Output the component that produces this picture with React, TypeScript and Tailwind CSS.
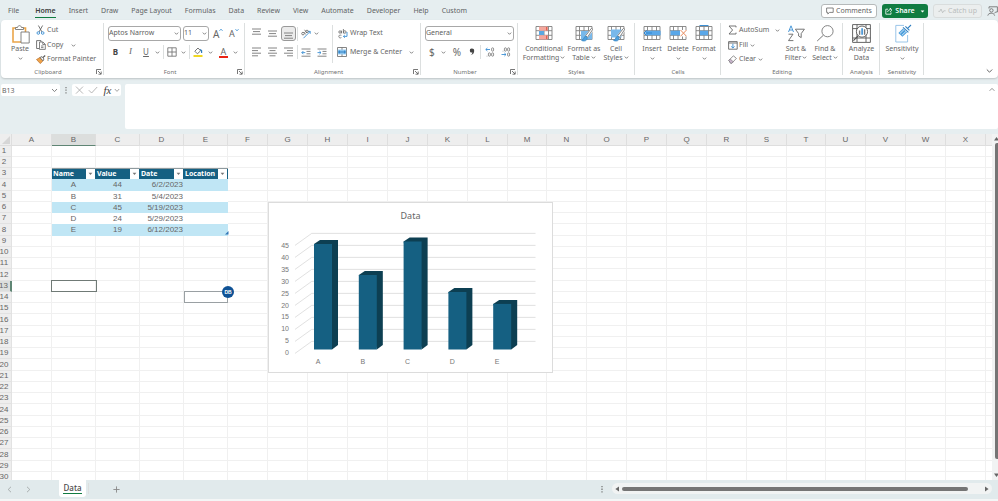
import type { ReactNode } from "react";

const TABS = ["Home", "Insert", "Draw", "Page Layout", "Formulas", "Data", "Review", "View", "Automate", "Developer", "Help", "Custom"];
const COLS = "ABCDEFGHIJKLMNOPQRSTUVWX".split("");
const WIDE = ["B", "C", "D", "E"];
const NARROW = ["M", "T"];
const HEADERS = ["Name", "Value", "Date", "Location"];
const RECORDS = [
  ["A", "44", "6/2/2023", ""],
  ["B", "31", "5/4/2023", ""],
  ["C", "45", "5/19/2023", ""],
  ["D", "24", "5/29/2023", ""],
  ["E", "19", "6/12/2023", ""],
];

function Svg({ w, h, className = "", children }: { w: number; h: number; className?: string; children: ReactNode }) {
  return (
    <svg width={w} height={h} viewBox={`0 0 ${w} ${h}`} fill="none" aria-hidden="true" className={`shrink-0 ${className}`}>
      {children}
    </svg>
  );
}

function Chevron({ className = "" }: { className?: string }) {
  return (
    <Svg w={5} h={5} className={className}>
      <path d="M0.8 1.6 L2.5 3.3 L4.2 1.6" stroke="#777" strokeWidth="0.9" />
    </Svg>
  );
}

function Launcher() {
  return (
    <button aria-label="More options" className="absolute right-[2px] bottom-[3px]">
      <Svg w={6} h={6}>
        <path d="M0.5 5 V0.5 H5 M2 2 L5 5 M5.2 2.5 V5.2 H2.5" stroke="#555" strokeWidth="0.8" />
      </Svg>
    </button>
  );
}

function Group({ label, width, launcher, children }: { label: string; width: string; launcher?: boolean; children: ReactNode }) {
  return (
    <section className={`relative flex shrink-0 flex-col ${width}`}>
      <div className="flex h-[47px]">{children}</div>
      <h2 className={`text-center text-[6px] leading-[10px] text-[#707070] ${launcher ? "pr-[9px]" : ""}`}>{label}</h2>
      {launcher && <Launcher />}
      <div className="absolute top-[3px] right-0 bottom-[3px] w-px bg-[#dcdfdf]" />
    </section>
  );
}

function Big({ icon, lines, arrow, width }: { icon: ReactNode; lines: string[]; arrow?: boolean; width: string }) {
  return (
    <button className={`flex shrink-0 flex-col items-center pt-[5px] leading-[9px] whitespace-nowrap ${width}`}>
      <span className="flex h-[19px] items-start">{icon}</span>
      <span>{lines[0]}</span>
      <span className="flex items-center gap-px">
        {lines[1]}
        {arrow && <Chevron className={lines[1] ? "" : "mt-[3px]"} />}
      </span>
    </button>
  );
}

function Small({ icon, text, children }: { icon: ReactNode; text: string; children?: ReactNode }) {
  return (
    <button className="flex h-[15px] items-center whitespace-nowrap">
      <span className="flex w-[11px]">{icon}</span>
      {text}
      {children}
    </button>
  );
}

function Lines({ xs, y = 1 }: { xs: number[][]; y?: number }) {
  return (
    <Svg w={9} h={10}>
      {xs.map(([a, b], i) => (
        <path key={i} d={`M${a} ${y + i * 2.6} H${b}`} stroke="#777" strokeWidth="0.9" />
      ))}
    </Svg>
  );
}

function Sep({ className = "" }: { className?: string }) {
  return <div className={`w-px shrink-0 bg-[#dcdfdf] ${className}`} />;
}

function TableGrid({ children }: { children?: ReactNode }) {
  return (
    <Svg w={18} h={17}>
      <path d="M1 1.5 H17 V14.5 H1 Z M1 5.7 H17 M1 10.3 H17 M4.5 1.5 V14.5 M9 1.5 V14.5 M13.5 1.5 V14.5" stroke="#808080" strokeWidth="0.9" fill="#fff" />
      {children}
    </Svg>
  );
}

function Brush() {
  return (
    <>
      <path d="M17.5 4 L11 12" stroke="#fff" strokeWidth="3.4" />
      <path d="M17.8 4.3 L12.4 12.4 L10.6 10.8 L16.4 3.4 Z" fill="#fff" stroke="#666" strokeWidth="0.8" />
      <path d="M11 11 C9 11 9.2 14.6 6.5 15.4 C9.5 17 12.5 15.6 12.2 12.6 Z" fill="#4d9fdc" stroke="#2f7fc0" strokeWidth="0.6" />
    </>
  );
}

function ClipboardGroup() {
  return (
    <Group label="Clipboard" width="w-[103px]" launcher>
      <Big
        width="w-[35px] pl-[3px]"
        lines={["Paste", ""]}
        arrow
        icon={
          <Svg w={18} h={19} className="ml-[2px]">
            <path d="M1 3 H13.5 V17 H1 Z" stroke="#eaa54a" strokeWidth="1.6" fill="#fff" />
            <path d="M3.5 4.5 V2.5 H5.5 C6 0 9 0 9.5 2.5 H11.5 V4.5 Z" fill="#fff" stroke="#777" strokeWidth="0.9" />
            <path d="M9 7 H17.2 V18 H9 Z" fill="#fff" stroke="#777" strokeWidth="0.9" />
          </Svg>
        }
      />
      <div className="flex flex-col pt-[3px]">
        <Small
          text="Cut"
          icon={
            <Svg w={9} h={10}>
              <path d="M2.4 0.5 L6 7 M6.6 0.5 L3 7" stroke="#666" strokeWidth="0.9" />
              <circle cx="2.3" cy="8" r="1.3" stroke="#3b8fd4" strokeWidth="0.9" />
              <circle cx="6.7" cy="8" r="1.3" stroke="#3b8fd4" strokeWidth="0.9" />
            </Svg>
          }
        />
        <Small
          text="Copy"
          icon={
            <Svg w={10} h={10}>
              <path d="M3 8.5 H0.6 V0.6 H5 V2" stroke="#666" strokeWidth="0.9" />
              <path d="M3.5 2 H7 L9.3 4.3 V9.4 H3.5 Z M6.8 2 V4.5 H9.3 M5 6 H7.5 M5 7.6 H7.5" stroke="#666" strokeWidth="0.8" />
            </Svg>
          }
        >
          <Chevron className="ml-[8px]" />
        </Small>
        <Small
          text="Format Painter"
          icon={
            <Svg w={10} h={9}>
              <path d="M0.5 4.5 L4 2.5 L7 5.8 L4.3 8.6 Z" fill="#f0a34a" stroke="#b86f28" strokeWidth="0.7" />
              <path d="M4 2.5 L6 1.6 L8 4 L7 5.8 Z" fill="#fff" stroke="#555" strokeWidth="0.8" />
              <path d="M6.8 2.6 L9.2 0.5" stroke="#555" strokeWidth="1.2" />
            </Svg>
          }
        />
      </div>
    </Group>
  );
}

function Picker({ label, value, width }: { label: string; value: string; width: string }) {
  return (
    <div className={`relative shrink-0 ${width}`}>
      <select aria-label={label} className="h-[15px] w-full appearance-none rounded-[3px] border border-[#a8a8a8] bg-white text-[7px] text-[#606060]">
        <option>{value}</option>
      </select>
      <Chevron className="pointer-events-none absolute top-[5px] right-[2px]" />
    </div>
  );
}

function FontGroup() {
  return (
    <Group label="Font" width="w-[141px]" launcher>
      <div className="flex flex-col gap-[4px] pt-[6px] pl-[4px]">
        <div className="flex h-[15px] items-center">
          <Picker label="Font" value="Aptos Narrow" width="w-[73px]" />
          <div className="w-[2px]" />
          <Picker label="Font size" value="11" width="w-[26px]" />
          <button aria-label="Increase font size" className="ml-[4px] flex w-[13px] items-start text-[10px] leading-[12px]">
            A
            <Svg w={4} h={4}><path d="M0.5 2.8 L2 1.2 L3.5 2.8" stroke="#3b8fd4" strokeWidth="0.9" /></Svg>
          </button>
          <button aria-label="Decrease font size" className="ml-[3px] flex items-start text-[9px] leading-[12px]">
            A
            <Svg w={4} h={4}><path d="M0.5 1.2 L2 2.8 L3.5 1.2" stroke="#3b8fd4" strokeWidth="0.9" /></Svg>
          </button>
        </div>
        <div className="flex h-[14px] items-center">
          <button className="w-[15px] text-[8px] font-bold text-[#444]">B</button>
          <button className="w-[15px] font-['Liberation_Serif',serif] text-[9px] italic">I</button>
          <button className="w-[16px] text-[8px] underline">U</button>
          <Chevron className="ml-px" />
          <Sep className="mx-[3px] h-[14px]" />
          <button aria-label="Borders" className="flex">
            <Svg w={10} h={10}><path d="M0.8 0.8 H9.2 V9.2 H0.8 Z M5 0.8 V9.2 M0.8 5 H9.2" stroke="#777" strokeWidth="0.9" /></Svg>
          </button>
          <Chevron className="ml-[4px]" />
          <Sep className="mx-[3px] h-[14px]" />
          <button aria-label="Fill color" className="flex">
            <Svg w={10} h={10}>
              <path d="M1.8 4.2 L5 1 L7.6 3.8 L4.4 6.8 Z" stroke="#666" strokeWidth="0.9" />
              <path d="M7 2.4 L8.6 3.6 V6" stroke="#2f7fc0" strokeWidth="1.2" />
              <rect x="0.5" y="8" width="9" height="2" fill="#f0d722" />
            </Svg>
          </button>
          <Chevron className="ml-[5px]" />
          <button aria-label="Font color" className="ml-[6px] flex h-[11px] w-[9px] flex-col items-center border-b-2 border-[#ea2414] text-[9px] leading-[9px]">A</button>
          <Chevron className="ml-[5px]" />
        </div>
      </div>
    </Group>
  );
}

function IndentIcon({ left }: { left?: boolean }) {
  return (
    <Svg w={10} h={9}>
      <path d="M0.5 1 H9.5 M5.5 3.4 H9.5 M5.5 5.8 H9.5 M0.5 8.2 H9.5" stroke="#777" strokeWidth="0.9" />
      <path d={left ? "M4.3 4.6 H0.8 M2.4 3 L0.8 4.6 L2.4 6.2" : "M0.5 4.6 H4 M2.4 3 L4 4.6 L2.4 6.2"} stroke="#3b8fd4" strokeWidth="0.9" />
    </Svg>
  );
}

function AlignmentGroup() {
  return (
    <Group label="Alignment" width="w-[176px]" launcher>
      <div className="flex flex-col gap-[4px] pt-[6px] pl-[7px]">
        <div className="flex h-[15px] items-center">
          <button aria-label="Top align" className="flex w-[16px] pb-[2px]"><Lines xs={[[0, 9], [1, 8], [0, 9]]} /></button>
          <button aria-label="Middle align" className="flex w-[13px]"><Lines y={2} xs={[[0, 9], [1, 8], [0, 9]]} /></button>
          <button aria-label="Bottom align" className="flex h-[15px] w-[15px] items-center justify-center rounded-[3px] border border-[#999] bg-[#ebebeb]"><Lines y={4} xs={[[0, 9], [1, 8], [0, 9]]} /></button>
          <Sep className="ml-px h-[14px]" />
          <button aria-label="Orientation" className="ml-[3px] flex items-center">
            <Svg w={10} h={10}>
              <path d="M2.5 9.2 L9 2.6 M6.8 2.4 H9.2 V4.8" stroke="#3b8fd4" strokeWidth="0.9" />
              <circle cx="2" cy="4.6" r="1.3" stroke="#666" strokeWidth="0.8" />
              <path d="M3.2 3.2 L4.6 5.4 M3.6 0.8 L5.8 4" stroke="#666" strokeWidth="0.8" />
              <circle cx="6" cy="2.4" r="1.2" stroke="#666" strokeWidth="0.8" />
            </Svg>
            <Chevron className="ml-[3px]" />
          </button>
        </div>
        <div className="flex h-[14px] items-center">
          <button aria-label="Align left" className="flex w-[16px]"><Lines xs={[[0, 9], [0, 6], [0, 9], [0, 6]]} /></button>
          <button aria-label="Center" className="flex w-[16px]"><Lines xs={[[0, 9], [1.5, 7.5], [0, 9], [1.5, 7.5]]} /></button>
          <button aria-label="Align right" className="flex w-[13px]"><Lines xs={[[0, 9], [3, 9], [0, 9], [3, 9]]} /></button>
          <Sep className="h-[14px]" />
          <button aria-label="Decrease indent" className="ml-[3px] flex w-[16px]"><IndentIcon left /></button>
          <button aria-label="Increase indent" className="flex w-[14px]"><IndentIcon /></button>
        </div>
      </div>
      <Sep className="mt-[5px] ml-px h-[38px]" />
      <div className="flex flex-col gap-[4px] pt-[6px] pl-[4px]">
        <button className="flex h-[15px] items-center whitespace-nowrap">
          <Svg w={10} h={10} className="mr-[2px] ml-px">
            <circle cx="2" cy="3" r="1.2" stroke="#666" strokeWidth="0.8" />
            <path d="M3.5 1.6 V4.4 M5.4 0 V4.4 M3.4 6.3 C1.5 5.6 0.8 6.6 0.8 7.5 C0.8 9 2.6 9.2 3.4 8.6" stroke="#666" strokeWidth="0.8" />
            <circle cx="6.8" cy="3" r="1.3" stroke="#666" strokeWidth="0.8" />
            <path d="M9 3 V7.4 H5.4 M6.8 6 L5.4 7.4 L6.8 8.8" stroke="#3b8fd4" strokeWidth="0.9" />
          </Svg>
          Wrap Text
        </button>
        <button className="flex h-[14px] items-center whitespace-nowrap">
          <Svg w={10} h={10} className="mr-[3px]">
            <path d="M0.5 0.5 H9.5 V9.5 H0.5 Z M5 0.5 V3 M5 7 V9.5" stroke="#777" strokeWidth="0.9" />
            <rect x="0.8" y="2.6" width="8.4" height="4.8" fill="#8cc6f0" />
            <path d="M1.6 5 H8.4 M3 3.7 L1.6 5 L3 6.3 M7 3.7 L8.4 5 L7 6.3" stroke="#1d70b8" strokeWidth="0.8" />
          </Svg>
          Merge &amp; Center
          <Chevron className="ml-[7px]" />
        </button>
      </div>
    </Group>
  );
}

function NumberGroup() {
  return (
    <Group label="Number" width="w-[97px]" launcher>
      <div className="flex flex-col gap-[4px] pt-[6px] pl-[4px]">
        <Picker label="Number format" value="General" width="w-[89px]" />
        <div className="flex h-[14px] items-center text-[9px]">
          <button className="w-[16px] pl-[4px] text-left text-[10px]">$</button>
          <Chevron />
          <button className="ml-[4px] w-[14px] text-[10px]">%</button>
          <button aria-label="Comma style" className="ml-[5px] flex">
            <Svg w={6} h={8}><path d="M3 0.5 A2 2 0 1 0 3.4 4.4 C3.2 5.8 2.4 6.6 1.4 7.2 C4 6.8 5.2 5 5.2 2.8 C5.2 1.4 4.3 0.5 3 0.5 Z" fill="#444" /></Svg>
          </button>
          <Sep className="mr-[4px] ml-[5px] h-[14px]" />
          <button aria-label="Increase decimal" className="flex w-[16px]">
            <Svg w={10} h={10}>
              <path d="M5 2.5 H0.8 M2.4 1 L0.8 2.5 L2.4 4" stroke="#3b8fd4" strokeWidth="0.9" />
              <path d="M2 8.8 V9.4" stroke="#666" strokeWidth="0.8" />
              <rect x="6.6" y="0.8" width="2" height="3.4" rx="1" stroke="#666" strokeWidth="0.7" />
              <rect x="3.4" y="5.8" width="2" height="3.4" rx="1" stroke="#666" strokeWidth="0.7" />
              <rect x="6.6" y="5.8" width="2" height="3.4" rx="1" stroke="#666" strokeWidth="0.7" />
            </Svg>
          </button>
          <button aria-label="Decrease decimal" className="flex">
            <Svg w={10} h={10}>
              <path d="M0.5 7.5 H5 M3.4 6 L5 7.5 L3.4 9" stroke="#3b8fd4" strokeWidth="0.9" />
              <path d="M2 3.8 V4.4" stroke="#666" strokeWidth="0.8" />
              <rect x="6.6" y="5.8" width="2" height="3.4" rx="1" stroke="#666" strokeWidth="0.7" />
              <rect x="3.4" y="0.8" width="2" height="3.4" rx="1" stroke="#666" strokeWidth="0.7" />
              <rect x="6.6" y="0.8" width="2" height="3.4" rx="1" stroke="#666" strokeWidth="0.7" />
            </Svg>
          </button>
        </div>
      </div>
    </Group>
  );
}

function StylesGroup() {
  return (
    <Group label="Styles" width="w-[117px]">
      <Big
        width="w-[42px] ml-[5px]"
        lines={["Conditional", "Formatting"]}
        arrow
        icon={
          <TableGrid>
            <path d="M4 1.5 H12.5 V5.7 H4 Z M4 10.3 H12.5 V14.5 H4 Z" fill="#f4a79d" />
            <path d="M4 6 H9 V10 H4 Z" fill="#5aa7e0" />
            <path d="M11.8 2 V5.4 M11.8 10.6 V14" stroke="#e05b4b" strokeWidth="1.4" />
          </TableGrid>
        }
      />
      <Big
        width="w-[38px]"
        lines={["Format as", "Table"]}
        arrow
        icon={
          <TableGrid>
            <path d="M6 6 H17 V14.5 H6 Z" fill="#78b8ea" />
            <Brush />
          </TableGrid>
        }
      />
      <Big
        width="w-[26px]"
        lines={["Cell", "Styles"]}
        arrow
        icon={
          <TableGrid>
            <path d="M4 4.5 H14.5 V12.5 H4 Z" fill="#78b8ea" />
            <Brush />
          </TableGrid>
        }
      />
    </Group>
  );
}

function CellsGroup() {
  return (
    <Group label="Cells" width="w-[86px]">
      <Big
        width="w-[26px] ml-[4px]"
        lines={["Insert", ""]}
        arrow
        icon={
          <TableGrid>
            <path d="M3 5.7 H17.6 V10.3 H3 Z" fill="#5aa7e8" />
            <path d="M9 8 H1 M3.6 5.4 L1 8 L3.6 10.6" stroke="#2f86d0" />
          </TableGrid>
        }
      />
      <Big
        width="w-[26px]"
        lines={["Delete", ""]}
        arrow
        icon={
          <TableGrid>
            <path d="M1.5 5.7 H11 V10.3 H1.5 Z" fill="#5aa7e8" />
            <path d="M11 5 H18 V11.5 H11 Z" fill="#fff" />
            <path d="M11.5 5 L17.5 11.3 M17.5 5 L11.5 11.3" stroke="#e88a5d" />
          </TableGrid>
        }
      />
      <Big
        width="w-[26px]"
        lines={["Format", ""]}
        arrow
        icon={
          <TableGrid>
            <path d="M5 5.7 H13 V10.3 H5 Z" fill="#5aa7e8" />
            <path d="M4.5 0.5 H13.5" stroke="#3b8fd4" />
          </TableGrid>
        }
      />
    </Group>
  );
}

function EditingGroup() {
  return (
    <Group label="Editing" width="w-[122px]">
      <div className="flex w-[60px] flex-col pt-[3px] pl-[7px]">
        <Small text="AutoSum" icon={<Svg w={9} h={10}><path d="M8 2.4 V1 H1 L4.6 5 L1 9 H8 V7.6" stroke="#666" strokeWidth="0.9" /></Svg>}>
          <Chevron className="ml-[6px]" />
        </Small>
        <Small
          text="Fill"
          icon={
            <Svg w={10} h={9}>
              <path d="M0.6 0.6 H9.2 V8.2 H0.6 Z M0.6 2 H9.2" stroke="#666" strokeWidth="0.9" />
              <path d="M4.9 2.8 V7 M3.2 5.4 L4.9 7 L6.6 5.4" stroke="#3b8fd4" strokeWidth="0.9" />
            </Svg>
          }
        >
          <Chevron className="ml-[2px]" />
        </Small>
        <Small
          text="Clear"
          icon={
            <Svg w={9} h={9}>
              <path d="M0.8 5.4 L5.4 0.8 L8.4 3.4 L3.8 8.2 H2.6 Z" stroke="#777" strokeWidth="0.8" />
              <path d="M2.2 4 L5.4 6.8 L3.8 8.2 H2.6 L0.8 5.4 Z" fill="#c8b3cc" stroke="#777" strokeWidth="0.6" />
            </Svg>
          }
        >
          <Chevron className="ml-[2px]" />
        </Small>
      </div>
      <Big
        width="w-[30px]"
        lines={["Sort &", "Filter"]}
        arrow
        icon={
          <Svg w={18} h={17}>
            <path d="M1.5 7 L4 0.8 L6.5 7 M2.3 5 H5.7" stroke="#3b8fd4" strokeWidth="0.9" />
            <path d="M1.5 9.2 H6 L1.5 15.6 H6.4" stroke="#666" strokeWidth="0.9" />
            <path d="M8.4 4.2 H17.4 L14.2 8.6 V12.6 L11.6 11 V8.6 Z" stroke="#666" strokeWidth="0.9" />
          </Svg>
        }
      />
      <Big
        width="w-[28px]"
        lines={["Find &", "Select"]}
        arrow
        icon={
          <Svg w={18} h={17}>
            <circle cx="11.5" cy="6.2" r="5.6" stroke="#777" strokeWidth="0.9" />
            <path d="M7.4 10.2 L1.2 16" stroke="#777" />
          </Svg>
        }
      />
    </Group>
  );
}

function SheetGrid() {
  return (
    <table className="w-full table-fixed border-separate border-spacing-0 text-[8px] leading-[10px] text-[#666]">
      <colgroup>
        <col className="w-[12px]" />
        {COLS.map((c) => (
          <col key={c} className={WIDE.includes(c) ? "w-[44px]" : NARROW.includes(c) ? "w-[39px]" : "w-[40px]"} />
        ))}
        <col />
      </colgroup>
      <thead>
        <tr className="h-[12px] bg-[#eeeeee]">
          <th className="border-r border-b border-[#dedede] p-0">
            <Svg w={10} h={10} className="ml-px block"><path d="M9 1 V9 H1 Z" fill="#d6d6d6" /></Svg>
          </th>
          {COLS.map((c) => (
            <th
              key={c}
              scope="col"
              className={c === "B" ? "border-r border-b border-r-[#dedede] border-b-[#5f8574] bg-[#dcdedd] p-0 font-normal" : "border-r border-b border-[#dedede] p-0 font-normal"}
            >
              {c}
            </th>
          ))}
          <th className="border-b border-[#dedede] p-0" />
        </tr>
      </thead>
      <tbody>
        {Array.from({ length: 30 }, (_, i) => i + 1).map((r) => (
          <tr key={r} className={r % 4 === 0 ? "h-[12px]" : "h-[11px]"}>
            <th
              scope="row"
              className={r === 13 ? "overflow-hidden border-r-2 border-b border-r-[#5f8574] border-b-[#e2e2e2] bg-[#dcdedd] p-0 pr-[3px] font-normal" : "overflow-hidden border-r border-b border-[#e2e2e2] bg-[#eeeeee] p-0 pr-[3px] font-normal"}
            >
              <span className="flex justify-center">{r}</span>
            </th>
            {COLS.map((c, ci) => {
              const k = ci - 1;
              if (r === 3 && k >= 0 && k < 4) {
                return (
                  <td key={c} className="border-t border-[#8e9a9e] bg-[#156082] p-0 font-['Noto_Sans',sans-serif] text-[7px] font-bold text-white">
                    <span className="flex items-center justify-between pl-px whitespace-nowrap">
                      {HEADERS[k]}
                      <button aria-label={`Filter ${HEADERS[k]}`} className="mr-px flex h-[10px] w-[9px] items-center justify-center bg-white">
                        <Svg w={5} h={4}><path d="M0.6 0.8 H4.4 L2.5 3 Z" fill="#777" /></Svg>
                      </button>
                    </span>
                  </td>
                );
              }
              if (r > 3 && r < 9 && k >= 0 && k < 4) {
                return (
                  <td
                    key={c}
                    className={`p-0 pr-px ${r % 2 === 0 ? "bg-[#c0e6f5]" : ""} ${k < 2 ? "text-center" : "text-right"}`}
                  >
                    {RECORDS[r - 4][k]}
                  </td>
                );
              }
              return <td key={c} className="border-r border-b border-[#f0f0f0] p-0" />;
            })}
            <td className="border-b border-[#f0f0f0] p-0" />
          </tr>
        ))}
      </tbody>
    </table>
  );
}

const BARS = [
  { name: "A", value: 44 },
  { name: "B", value: 31 },
  { name: "C", value: 45 },
  { name: "D", value: 24 },
  { name: "E", value: 19 },
];

function Chart() {
  return (
    <figure className="absolute top-[68px] left-[268px] h-[171px] w-[285px] border border-[#dcdcdc] bg-white">
      <figcaption className="pt-[6px] text-center font-['Noto_Sans',sans-serif] text-[9px] leading-[13px] text-[#666]">Data</figcaption>
      <svg width="283" height="150" viewBox="0 20 283 150" fill="none" className="block" role="img" aria-label="Column chart of values">
        {Array.from({ length: 10 }, (_, i) => (
          <g key={i}>
            <path d={`M26 ${43.4 + i * 12} L42.7 ${31.4 + i * 12} H266.5`} stroke="#dcdcdc" strokeWidth="0.9" />
            <text x="20" y={46 + i * 11.9} textAnchor="end" fontSize="7" fill="#777">
              {45 - i * 5}
            </text>
          </g>
        ))}
        {BARS.map((b, i) => {
          const x = 45 + i * 44.8;
          const top = 147.5 - b.value * 2.4;
          return (
            <g key={b.name}>
              <path d={`M${x} ${top} L${x + 6} ${top - 4} H${x + 24} V143 L${x + 18} 147.5 Z`} fill="#0d3f52" />
              <path d={`M${x} ${top} H${x + 18} V147.5 H${x} Z`} fill="#156082" />
              <text x={x + 4} y="162" textAnchor="middle" fontSize="7" fill="#777">
                {b.name}
              </text>
            </g>
          );
        })}
      </svg>
    </figure>
  );
}

export default function App() {
  return (
    <div className="flex h-screen flex-col overflow-hidden bg-[#e6eef0] font-['Noto_Sans',sans-serif] text-[7px] text-[#666]">
      <header className="flex h-[20px] shrink-0 items-center pl-[8px] leading-[10px] text-[#5f6364]">
        <nav aria-label="Ribbon tabs" className="flex gap-[13px] pt-[4px] whitespace-nowrap">
          <button className="mr-[3px] pb-[2px]">File</button>
          {TABS.map((t) => (
            <button key={t} className={t === "Home" ? "border-b border-[#107c41] pb-px font-semibold text-[#404040]" : "pb-[2px]"}>
              {t}
            </button>
          ))}
        </nav>
        <div className="ml-auto flex items-center gap-[5px] pt-[2px] whitespace-nowrap">
          <button className="flex h-[14px] w-[56px] items-center justify-center gap-[2px] rounded-[3px] border border-[#b5b9ba] bg-white">
            <Svg w={8} h={8}><path d="M0.6 1 H7.2 V5.4 H3.6 L1.8 7 V5.4 H0.6 Z" stroke="#666" strokeWidth="0.8" /></Svg>
            Comments
          </button>
          <button className="flex h-[14px] w-[46px] items-center justify-center gap-[3px] rounded-[3px] bg-[#107c41] font-semibold text-white">
            <Svg w={7} h={8}><path d="M3 2.2 H0.8 V7.2 H6 V5.4 M2.6 5 C2.8 3.4 4 2.8 5.2 2.8 V1 L6.8 3.2 L5.2 5" stroke="#fff" strokeWidth="0.8" /></Svg>
            Share
            <Svg w={5} h={5} className="ml-[2px]"><path d="M0.6 1.4 H4.4 L2.5 3.6 Z" fill="#fff" /></Svg>
          </button>
          <button className="flex h-[14px] w-[49px] items-center justify-center gap-[2px] rounded-[3px] border border-[#d9dddd] bg-[#ebeeee] text-[#b9bcbc]">
            <Svg w={8} h={6}><path d="M0.4 3.4 H1.8 L3 1 L4.6 4.8 L5.8 2.8 H7.6" stroke="#b9bcbc" strokeWidth="0.8" /></Svg>
            Catch up
          </button>
          <button aria-label="Presence" className="flex">
            <Svg w={11} h={10}>
              <path d="M2 2.6 V0.8 H10.4 V6 H8.6 L7.4 7.4" stroke="#666" strokeWidth="0.8" />
              <circle cx="4.4" cy="4.4" r="1.7" stroke="#666" strokeWidth="0.8" />
              <path d="M0.8 9.6 C1.2 6.4 7.2 6.4 7.6 9.6" stroke="#666" strokeWidth="0.8" />
            </Svg>
          </button>
        </div>
      </header>

      <div className="ml-px flex h-[58px] shrink-0 rounded-[4px] bg-white shadow-[0_1px_2px_rgba(0,0,0,0.18)]">
        <ClipboardGroup />
        <FontGroup />
        <AlignmentGroup />
        <NumberGroup />
        <StylesGroup />
        <CellsGroup />
        <EditingGroup />
        <Group label="Analysis" width="w-[37px]">
          <Big
            width="w-full"
            lines={["Analyze", "Data"]}
            icon={
              <Svg w={19} h={19} className="-mt-px">
                <path d="M0.6 0.6 H18.4 V18.4 H0.6 Z M0.6 4.6 H18.4 M0.6 14 H18.4 M5 0.6 V18 M14 0.6 V18" stroke="#555" strokeWidth="0.9" />
                <circle cx="10" cy="7.6" r="5.6" fill="#fff" stroke="#555" strokeWidth="0.9" />
                <path d="M6 12 L1.4 16.6" stroke="#555" strokeWidth="1.1" />
                <path d="M7.6 6.6 V10.8 M12.6 5.2 V10.8" stroke="#777" strokeWidth="1.4" />
                <path d="M10.1 4.2 V10.8" stroke="#3b8fd4" strokeWidth="1.6" />
              </Svg>
            }
          />
        </Group>
        <Group label="Sensitivity" width="w-[44px]">
          <Big
            width="w-full"
            lines={["Sensitivity", ""]}
            arrow
            icon={
              <Svg w={17} h={19} className="-mt-px ml-[2px]">
                <path d="M9 1.4 H0.8 V18 H12.6 V11" stroke="#8fbfe6" strokeWidth="0.9" />
                <path d="M3.4 9 L8 4.6 L12 8.4 L7.4 12.8 Z" fill="#4d9fdc" />
                <path d="M5 9.4 L9 5.6 M7 11.2 L11 7.4" stroke="#fff" strokeWidth="0.7" />
                <path d="M8 3.4 L13.4 8.4 M10.4 2.4 L14.4 6.4 M12.6 4.4 L16 1" stroke="#2f7fc0" strokeWidth="1.1" />
              </Svg>
            }
          />
        </Group>
        <button aria-label="Collapse ribbon" className="mt-auto mr-[5px] mb-[4px] ml-auto flex">
          <Svg w={7} h={6}><path d="M0.8 1.5 L3.5 4.2 L6.2 1.5" stroke="#555" strokeWidth="0.9" /></Svg>
        </button>
      </div>

      <div className="flex h-[56px] shrink-0 pt-[6px] pb-[5px] pl-px">
        <div className="flex h-[12px] w-[59px] items-center rounded-[2px] bg-white pr-[2px]">
          <input aria-label="Name box" defaultValue="B13" className="w-0 flex-1 bg-transparent pl-px text-[7px] leading-[11px]" />
          <Svg w={7} h={5}><path d="M1 1 L3.5 3.6 L6 1" stroke="#777" strokeWidth="0.9" /></Svg>
        </div>
        <Svg w={12} h={12}><path d="M6 3 V4.2 M6 5.6 V6.8 M6 8.2 V9.4" stroke="#777" strokeWidth="1.2" /></Svg>
        <div className="flex h-[12px] w-[49px] items-center rounded-[2px] bg-white">
          <button aria-label="Cancel" className="ml-[3px] flex"><Svg w={9} h={8}><path d="M1 0.6 L8 7.6 M8 0.6 L1 7.6" stroke="#a5a5a5" strokeWidth="0.8" /></Svg></button>
          <button aria-label="Enter" className="ml-[4px] flex"><Svg w={10} h={8}><path d="M0.8 4.2 L3.6 7 L9.2 1" stroke="#a5a5a5" strokeWidth="0.8" /></Svg></button>
          <button className="ml-[5px] w-[9px] font-['Liberation_Serif',serif] text-[11px] leading-[12px] text-[#404040] italic">fx</button>
          <Svg w={6} h={5} className="ml-[2px]"><path d="M0.8 1 L3 3.4 L5.2 1" stroke="#999" strokeWidth="0.9" /></Svg>
        </div>
        <div className="ml-[4px] flex flex-1 items-start rounded-[2px] bg-white">
          <textarea aria-label="Formula bar" className="h-full flex-1 resize-none bg-transparent" />
          <button aria-label="Collapse formula bar" className="mt-[3px] mr-[3px]">
            <Svg w={6} h={5}><path d="M0.6 3.8 L3 1.4 L5.4 3.8" stroke="#777" strokeWidth="0.8" /></Svg>
          </button>
        </div>
      </div>

      <main className="flex min-h-0 flex-1">
        <div className="relative min-w-0 flex-1 overflow-hidden bg-white font-['Liberation_Sans',Arial,sans-serif]">
          <SheetGrid />
          <Svg w={4} h={4} className="absolute top-[97px] left-[225px]"><path d="M3.5 0 V3.5 H0 Z" fill="#2f75b5" /></Svg>
          <div className="absolute top-[146px] left-[51px] h-[12px] w-[46px] border border-[#707a76]" />
          <div className="absolute top-[157px] left-[184px] h-[12px] w-[44px] border border-[#9aa0a3]" />
          <div className="absolute top-[152px] left-[222px] flex h-[12px] w-[12px] items-center justify-center rounded-full bg-[#0f5295] text-[5px] leading-none font-bold text-white">DB</div>
          <Chart />
        </div>
        <div aria-hidden="true" className="flex w-[6px] shrink-0 flex-col items-end bg-[#f1f3f3] pt-[2px] pb-[2px]">
          <Svg w={4} h={5}><path d="M0 4.5 L2.5 1 L4 3 V4.5 Z" fill="#666" /></Svg>
          <div className="mt-[2px] w-[3px] flex-1 rounded-l-[2px] bg-[#757575]" />
          <Svg w={4} h={5} className="mt-[14px]"><path d="M0 0.5 H4 V2 L2.5 4 Z" fill="#666" /></Svg>
        </div>
      </main>

      <footer className="flex h-[21px] shrink-0 items-start border-b-2 border-[#f4f6f6] bg-[#e1eaec]">
        <button aria-label="Previous sheet" className="mt-[6px] ml-[7px] flex"><Svg w={5} h={7}><path d="M4 0.8 L1.2 3.5 L4 6.2" stroke="#9a9f9f" strokeWidth="0.8" /></Svg></button>
        <button aria-label="Next sheet" className="mt-[6px] ml-[14px] flex"><Svg w={5} h={7}><path d="M1 0.8 L3.8 3.5 L1 6.2" stroke="#9a9f9f" strokeWidth="0.8" /></Svg></button>
        <button className="ml-[28px] flex h-[17px] w-[27px] items-start justify-center rounded-b-[3px] bg-white pt-[3px] text-[8px] leading-[10px] font-medium text-[#4a4a4a]">
          <span className="border-b border-[#107c41]">Data</span>
        </button>
        <Sep className="mt-[3px] ml-[2px] h-[11px] bg-[#bcc5c7]" />
        <button aria-label="New sheet" className="mt-[6px] ml-[24px] flex"><Svg w={7} h={7}><path d="M3.5 0.4 V6.6 M0.4 3.5 H6.6" stroke="#888" strokeWidth="0.9" /></Svg></button>
        <div className="mt-[3px] mr-[6px] ml-auto flex w-[392px] items-center">
          <Svg w={4} h={10}><path d="M2 2 V3.3 M2 4.6 V5.9 M2 7.2 V8.5" stroke="#666" strokeWidth="1.1" /></Svg>
          <div aria-hidden="true" className="ml-[8px] flex h-[11px] flex-1 items-center rounded-full bg-[#f1f3f3] px-[3px]">
            <Svg w={4} h={6}><path d="M4 0.5 V5.5 L0.4 3 Z" fill="#666" /></Svg>
            <div className="mr-[17px] ml-[3px] h-[4px] flex-1 rounded-full bg-[#757575]" />
            <Svg w={4} h={6}><path d="M0 0.5 V5.5 L3.6 3 Z" fill="#666" /></Svg>
          </div>
        </div>
      </footer>
    </div>
  );
}
